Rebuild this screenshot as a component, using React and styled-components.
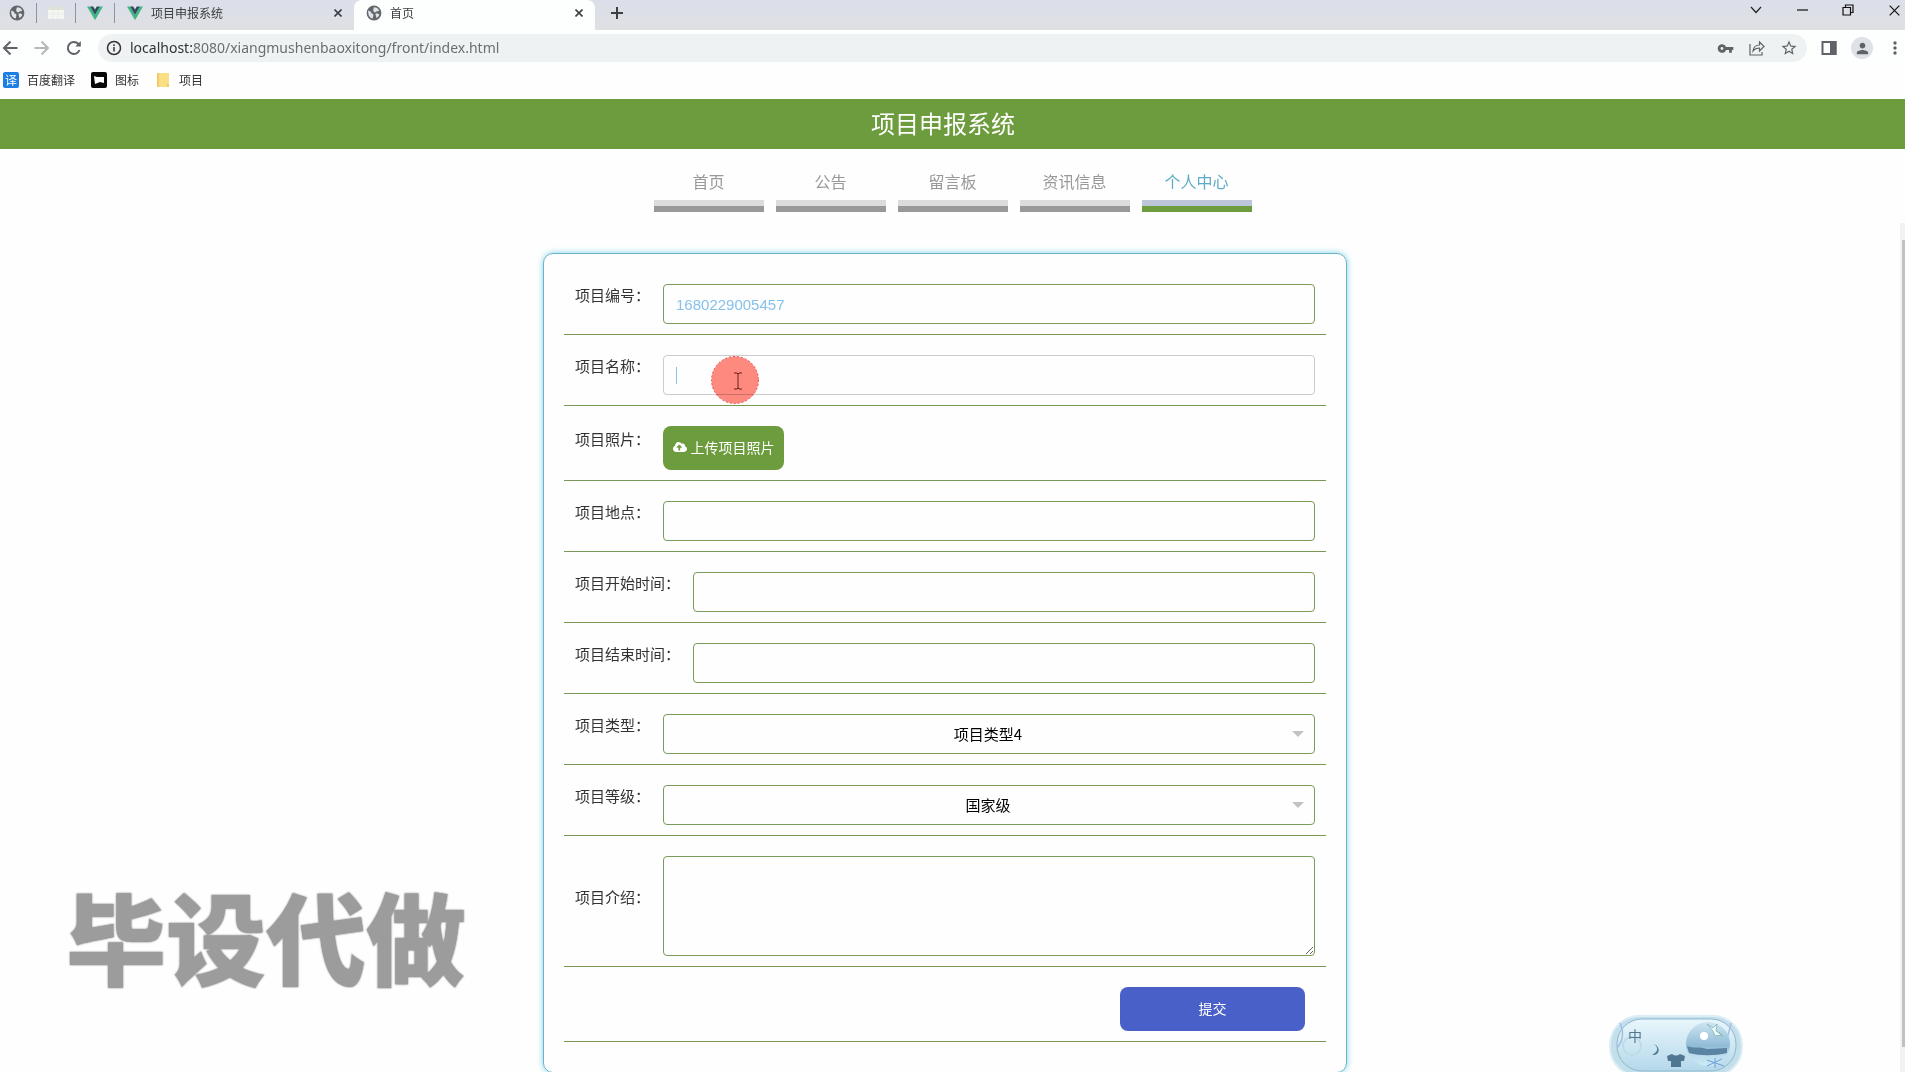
import React, { useState } from "react";
import styled, { createGlobalStyle, css } from "styled-components";
import { FaCloudUploadAlt } from "react-icons/fa";
import { MdVpnKey, MdStarBorder, MdPerson, MdMoreVert } from "react-icons/md";

const cjk = '"Noto Sans CJK SC", sans-serif';
const green = "#6c9c3d";

const GlobalStyle = createGlobalStyle`
  *, *::before, *::after { box-sizing: border-box; }
  body {
    margin: 0;
    background: #fefefe;
    color: #333;
    font-family: "Liberation Sans", ${cjk};
    font-size: 15px;
    overflow: hidden;
  }
  button, input, select, textarea { font: inherit; }
  h1 { margin: 0; }
`;

const Page = styled.div`
  display: flex;
  flex-direction: column;
  height: 100vh;
`;

/* ---------- browser chrome ---------- */

const TabStrip = styled.div`
  display: flex;
  align-items: stretch;
  height: 30px;
  background: linear-gradient(#dbdfe9, #dfe0e3);
`;

const PinnedTab = styled.button`
  position: relative;
  display: flex;
  align-items: center;
  justify-content: flex-end;
  width: ${(p) => (p.$first ? 37 : 39)}px;
  height: 26px;
  padding: 0 12px 0 0;
  border: 0;
  background: none;

  &::after {
    content: "";
    position: absolute;
    top: 3px;
    right: 0;
    width: 1px;
    height: 20px;
    background: #8f949c;
  }
`;

const Tab = styled.div`
  display: flex;
  align-items: center;
  gap: 8px;
  width: ${(p) => (p.$active ? 241 : 239)}px;
  padding: 0 8px 4px 12px;
  background: ${(p) => (p.$active ? "#fdfefe" : "transparent")};
  border-radius: 8px 8px 0 0;
  font: 12px/16px ${cjk};
  color: #3c4043;
`;

const TabTitle = styled.span`
  flex: 1;
`;

const IconButton = styled.button`
  display: flex;
  align-items: center;
  justify-content: center;
  flex: none;
  width: ${(p) => p.$w || 16}px;
  height: ${(p) => p.$h || 16}px;
  padding: 0;
  border: 0;
  border-radius: 50%;
  background: ${(p) => p.$bg || "none"};
  color: ${(p) => p.$color || "#5f6368"};
`;

const WindowControls = styled.div`
  display: flex;
  margin-left: auto;
  margin-right: -12px;
`;

const Toolbar = styled.div`
  display: flex;
  align-items: center;
  height: 36px;
  background: #fdfefe;
`;

const NavButtons = styled.div`
  display: flex;
  padding-left: 2px;
  gap: 16px;
`;

const ToolbarEnd = styled.div`
  display: flex;
  align-items: center;
  gap: 12px;
`;

const AddressBar = styled.div`
  display: flex;
  align-items: center;
  gap: 8px;
  flex: 1;
  height: 28px;
  margin: 0 12px 0 16px;
  padding: 0 8px;
  border-radius: 14px;
  background: #eff2f3;
`;

const Url = styled.div`
  flex: 1;
  font: 14px/20px "Noto Sans", sans-serif;
  color: #6b6f73;

  b {
    font-weight: 400;
    color: #303336;
  }
`;

const AddressActions = styled.div`
  display: flex;
  gap: 12px;
`;

const BookmarkBar = styled.nav`
  display: flex;
  align-items: center;
  height: 33px;
  padding: 0 3px 6px;
  gap: 16px;
  background: #fefefe;
`;

const Bookmark = styled.a`
  display: flex;
  align-items: center;
  gap: 8px;
  font: 12px/16px ${cjk};
  color: #333;
  text-decoration: none;
`;

const TranslateBadge = styled.span`
  width: 16px;
  height: 16px;
  border-radius: 2px;
  background: #1b7fe3;
  color: #fff;
  font-size: 12px;
  line-height: 16px;
  text-align: center;
`;

/* ---------- site ---------- */

const SiteHeader = styled.header`
  flex: none;
  height: 50px;
  padding-right: 19px;
  background: ${green};
  color: #fff;
  text-align: center;

  h1 {
    font: 24px/48px ${cjk};
  }
`;

const SiteNav = styled.nav`
  display: flex;
  flex: none;
  justify-content: center;
  gap: 12px;
  padding: 20px 0 11px;
`;

const NavLink = styled.a`
  width: 110px;
  border-bottom: 6px solid ${(p) => (p.$active ? green : "#999")};
  color: ${(p) => (p.$active ? "#5eacc4" : "#999")};
  font: 16px/24px ${cjk};
  text-align: center;
  text-decoration: none;

  span {
    display: block;
    padding-bottom: 7px;
    border-bottom: 6px solid ${(p) => (p.$active ? "#bcc6d9" : "#dcdcdc")};
  }
`;

const Body = styled.div`
  display: flex;
  flex: 1;
  min-height: 0;
`;

const Main = styled.main`
  flex: 1;
  padding: 30px 10px 0 0;
  overflow: hidden;
`;

const ScrollTrack = styled.div`
  width: 5px;
  padding: 17px 0 0 2px;
  background: #f3f1f3;

  &::before {
    content: "";
    display: block;
    height: 97%;
    background: #c1c1c3;
  }
`;

const Panel = styled.form`
  max-width: 804px;
  margin: 0 auto;
  padding: 10px 20px 30px;
  border: 1px solid #68b4c6;
  border-radius: 10px;
  box-shadow: 0 0 6px #7fd3e6;
`;

const Row = styled.div`
  display: flex;
  align-items: center;
  justify-content: ${(p) => (p.$end ? "flex-end" : "flex-start")};
  padding: 20px ${(p) => (p.$end ? 21 : 11)}px 10px 11px;
  border-bottom: 1px solid #789858;
`;

const Label = styled.label`
  flex: none;
  padding: 0 13px 18px 0;
  font: 15px/20px ${cjk};
`;

const control = css`
  display: block;
  width: 100%;
  border: 1px solid ${(p) => (p.$focused ? "#ccc" : "#7a9b59")};
  border-radius: 4px;
  background: #fefefe;
  outline: none;
`;

const TextInput = styled.input`
  ${control}
  height: 40px;
  padding: 0 12px;
  color: #86c1ec;
`;

const TextArea = styled.textarea`
  ${control}
  height: 100px;
  padding: 12px;
  resize: both;
`;

const Select = styled.select`
  ${control}
  appearance: none;
  height: 40px;
  padding: 0 12px 2px 10px;
  color: #000;
  font-family: ${cjk};
  text-align: center;
  text-align-last: center;
`;

const ControlBox = styled.div`
  position: relative;
  flex: 1;
`;

const SelectArrow = styled.span`
  position: absolute;
  top: 17px;
  right: 11px;
  border: 6px solid transparent;
  border-top-color: #c2c2c2;
  border-bottom: 0;
  pointer-events: none;
`;

const Caret = styled.span`
  position: absolute;
  top: 12px;
  left: 13px;
  width: 1px;
  height: 17px;
  background: #86c1ec;
`;

const Button = styled.button`
  display: flex;
  align-items: center;
  justify-content: center;
  gap: 4px;
  width: ${(p) => p.$w}px;
  height: 44px;
  padding: 0 0 2px;
  border: 0;
  border-radius: 8px;
  background: ${(p) => p.$bg};
  color: #fff;
  font: 14px/20px ${cjk};
`;

/* ---------- overlays ---------- */

const Pointer = styled.svg`
  position: absolute;
  top: 1px;
  left: 48px;
  mix-blend-mode: multiply;
`;

const Watermark = styled.div`
  position: fixed;
  left: 66px;
  bottom: 65px;
  color: #9c9c9c;
  font: 900 100px/144px ${cjk};
  -webkit-text-stroke: 2px #f4f4f4;
  paint-order: stroke fill;
  text-shadow: 0 0 2px #777;
`;

const InputMethod = styled.svg`
  position: fixed;
  right: 162px;
  bottom: 0;
`;

const Globe = () => (
  <svg width="16" height="16" viewBox="0 0 16 16">
    <circle cx="8" cy="8" r="7.4" fill="#63666b" />
    <path d="M2.2 5.5C4 5.8 5.4 7 5.6 8.4c1.6.2 2.2 1.200 1.600 2.400l-.4 2.600C3.800 13 1.800 10.500 2.200 5.500zM8 2.200c2.500 0 4.200 1.200 5.200 3.200-1 1-2 .4-2.800 1.200-.6 1.300-2 .6-2.800-.2C6.800 5.400 7.400 4 8 2.200zM9.500 8.800c1.500-.6 3 .2 3.900.9-.5 1.500-1.800 2.800-3.200 3.400.6-1.300-.9-2.500-.7-4.300z" fill="#dfe2e6" />
  </svg>
);

const Vue = () => (
  <svg width="16" height="16" viewBox="0 0 16 16">
    <path d="M0 1.500h3.400L8 9.400l4.600-7.900H16L8 15.200z" fill="#41b883" />
    <path d="M3.200 1.500h3L8 4.600l1.800-3.100h3L8 9.800z" fill="#35495e" />
  </svg>
);

const Sheet = () => (
  <svg width="16" height="16" viewBox="0 0 16 16">
    <path d="M0 2h16v12H0z" fill="#f5f6f3" />
    <path d="M0 2h16v3H0z" fill="#dde3d8" />
    <path d="M5 5v9M10 5v9M0 9h16" stroke="#e9ebe9" />
  </svg>
);

const Close = ({ size = 8, weight = 2 }) => (
  <svg width={size} height={size} viewBox="0 0 10 10" stroke="currentColor" strokeWidth={weight}>
    <path d="M.6.6l8.800 8.800M9.400.6L.6 9.400" />
  </svg>
);

const Stroke = ({ w = 16, h = w, weight = 2, children }) => (
  <svg width={w} height={h} viewBox={`0 0 ${w} ${h}`} fill="none" stroke="currentColor" strokeWidth={weight}>
    {children}
  </svg>
);

const navItems = ["首页", "公告", "留言板", "资讯信息", "个人中心"];

function TextField({ id, label, value = "", focused, children }) {
  const [text, setText] = useState(value);
  return (
    <Row>
      <Label htmlFor={id}>{label}：</Label>
      <ControlBox>
        <TextInput id={id} value={text} $focused={focused} onChange={(e) => setText(e.target.value)} />
        {children}
      </ControlBox>
    </Row>
  );
}

function SelectField({ id, label, options }) {
  return (
    <Row>
      <Label htmlFor={id}>{label}：</Label>
      <ControlBox>
        <Select id={id}>
          {options.map((o) => (
            <option key={o}>{o}</option>
          ))}
        </Select>
        <SelectArrow />
      </ControlBox>
    </Row>
  );
}

export default function App() {
  return (
    <Page>
      <GlobalStyle />
      <TabStrip>
        <PinnedTab $first><Globe /></PinnedTab>
        <PinnedTab><Sheet /></PinnedTab>
        <PinnedTab><Vue /></PinnedTab>
        <Tab>
          <Vue />
          <TabTitle>项目申报系统</TabTitle>
          <IconButton $color="#3c4043"><Close /></IconButton>
        </Tab>
        <Tab $active>
          <Globe />
          <TabTitle>首页</TabTitle>
          <IconButton $color="#3c4043"><Close /></IconButton>
        </Tab>
        <IconButton $w={44} $h={26} $color="#3c4043">
          <Stroke w={12}><path d="M6 0v12M0 6h12" /></Stroke>
        </IconButton>
        <WindowControls>
          <IconButton $w={46} $h={20} $color="#222">
            <Stroke w={12} h={8} weight={1.2}><path d="M1 1l5 5.500L11 1" /></Stroke>
          </IconButton>
          <IconButton $w={46} $h={20} $color="#111">
            <Stroke w={11} h={2} weight={1.2}><path d="M0 1h11" /></Stroke>
          </IconButton>
          <IconButton $w={46} $h={20} $color="#111">
            <Stroke w={12} weight={1.2}><path d="M1 3.500h7.500V11H1zM3.500 3.500V1H11v7.500H8.500" /></Stroke>
          </IconButton>
          <IconButton $w={46} $h={20} $color="#111"><Close size={11} weight={1.1} /></IconButton>
        </WindowControls>
      </TabStrip>

      <Toolbar>
        <NavButtons>
          <IconButton>
            <Stroke><path d="M15.500 8H2M8.500 1.500L2 8l6.500 6.500" /></Stroke>
          </IconButton>
          <IconButton $color="#b4b6b9">
            <Stroke><path d="M.5 8H14M7.500 1.500L14 8l-6.500 6.500" /></Stroke>
          </IconButton>
          <IconButton>
            <Stroke>
              <path d="M13.500 10a6 6 0 1 1-1.300-6.200L14 5.600" />
              <path d="M14.800 1v5.500H9.300z" fill="currentColor" stroke="none" />
            </Stroke>
          </IconButton>
        </NavButtons>
        <AddressBar>
          <Stroke weight={1.5}><circle cx="8" cy="8" r="6.500" /><path d="M8 7v4.500M8 4.300V6" /></Stroke>
          <Url><b>localhost:</b>8080/xiangmushenbaoxitong/front/index.html</Url>
          <AddressActions>
            <IconButton $w={20}><MdVpnKey size={17} /></IconButton>
            <IconButton $w={20}>
              <Stroke weight={1.2}>
                <path d="M1 4v11h12v-3" />
                <path d="M4 11c.5-4 2.500-6 6.500-6V2L15 6.500 10.500 11V8C7.500 8 5.500 9 4 11z" />
              </Stroke>
            </IconButton>
            <IconButton $w={20}><MdStarBorder size={18} /></IconButton>
          </AddressActions>
        </AddressBar>
        <ToolbarEnd>
          <IconButton $w={20}>
            <Stroke><path d="M1.500 2h13v12h-13z" /><path d="M10 2h4.500v12H10z" fill="currentColor" /></Stroke>
          </IconButton>
          <IconButton $w={22} $h={22} $bg="#dee1e6"><MdPerson size={17} /></IconButton>
          <IconButton $w={20}><MdMoreVert size={20} /></IconButton>
        </ToolbarEnd>
      </Toolbar>

      <BookmarkBar>
        <Bookmark href="#"><TranslateBadge>译</TranslateBadge>百度翻译</Bookmark>
        <Bookmark href="#">
          <svg width="16" height="16" viewBox="0 0 16 16">
            <rect width="16" height="16" rx="2" fill="#080808" />
            <path d="M3 4l3 1h7v6l-4-1-5 2z" fill="#fff" />
          </svg>
          图标
        </Bookmark>
        <Bookmark href="#">
          <svg width="16" height="16" viewBox="0 0 16 16">
            <path d="M2 1h12v14H2z" fill="#fbdf84" />
            <path d="M2 1h2v14H2zM12 12h2v3h-2z" fill="#efcb66" />
          </svg>
          项目
        </Bookmark>
      </BookmarkBar>

      <SiteHeader><h1>项目申报系统</h1></SiteHeader>
      <SiteNav>
        {navItems.map((item) => (
          <NavLink href="#" key={item} $active={item === "个人中心"}><span>{item}</span></NavLink>
        ))}
      </SiteNav>

      <Body>
        <Main>
          <Panel onSubmit={(e) => e.preventDefault()}>
            <TextField id="code" label="项目编号" value="1680229005457" />
            <TextField id="name" label="项目名称" focused>
              <Caret />
              <Pointer width="48" height="48" viewBox="0 0 48 48">
                <circle cx="24" cy="24" r="23.500" fill="#ff8a7e" stroke="#e0564c" strokeDasharray="2 2" />
                <path d="M23 17h3l1 1 1-1h3M23 33h3l1-1 1 1h3M27 18v14" fill="none" stroke="#6b1f1b" />
              </Pointer>
            </TextField>
            <Row>
              <Label htmlFor="photo">项目照片：</Label>
              <Button id="photo" type="button" $w={121} $bg={green}>
                <FaCloudUploadAlt size={14} />上传项目照片
              </Button>
            </Row>
            <TextField id="place" label="项目地点" />
            <TextField id="start" label="项目开始时间" />
            <TextField id="end" label="项目结束时间" />
            <SelectField id="type" label="项目类型" options={["项目类型4"]} />
            <SelectField id="level" label="项目等级" options={["国家级"]} />
            <Row>
              <Label htmlFor="intro">项目介绍：</Label>
              <TextArea id="intro" />
            </Row>
            <Row $end>
              <Button type="submit" $w={185} $bg="#4960c8">提交</Button>
            </Row>
          </Panel>
        </Main>
        <ScrollTrack />
      </Body>

      <Watermark>毕设代做</Watermark>
      <InputMethod width="134" height="57" viewBox="0 0 134 57">
        <defs>
          <linearGradient id="pill" x1="0" y1="0" x2="0" y2="1">
            <stop offset="0" stopColor="#e9f6fc" />
            <stop offset="1" stopColor="#b4d8ea" />
          </linearGradient>
          <linearGradient id="orb" x1="0" y1="0" x2="0" y2="1">
            <stop offset="0" stopColor="#cfe6f2" />
            <stop offset="0.550" stopColor="#8fbbd6" />
            <stop offset="0.700" stopColor="#b7d9ea" />
            <stop offset="1" stopColor="#cdeaf7" />
          </linearGradient>
        </defs>
        <rect x="1" y="1" width="132" height="60" rx="29" fill="#c3dfeb" stroke="#dceef5" strokeWidth="2" />
        <rect x="8" y="4" width="119" height="52" rx="25" fill="url(#pill)" stroke="#8fb9ce" />
        <path d="M11 8c4 9 3 18-3 25M122 8c-2 12-6 18-8 30" fill="none" stroke="#a4bfe0" strokeWidth="1.500" />
        <circle cx="23" cy="31" r="9" fill="none" stroke="#bcdbe8" strokeWidth="2" />
        <circle cx="99" cy="29" r="22" fill="url(#orb)" />
        <path d="M78 31c7 3 12 0 20 3l20-1v5c-12 3-27 3-38 0z" fill="#5a84a2" />
        <circle cx="95" cy="21" r="4" fill="#fff" />
        <path d="M98 9l6 4 4-4-1 7 6 4-7 1-2-5zM110 17l4 5" fill="#edfaf9" stroke="#7fb3b3" strokeWidth="0.800" />
        <path d="M98 45l17 6M98 51l15-7M106 43v10" stroke="#6c9fd6" />
        <text x="19" y="26" fill="#51758c" fontSize="14" fontFamily="Noto Sans CJK SC">中</text>
        <path d="M45 29c5 4 4 8-2 11 8 1 9-8 2-11z" fill="#4f7791" />
        <path d="M58 41l5-2q4 3 8 0l5 2-1 5h-3v6h-10v-6h-3z" fill="#4f7791" />
      </InputMethod>
    </Page>
  );
}
